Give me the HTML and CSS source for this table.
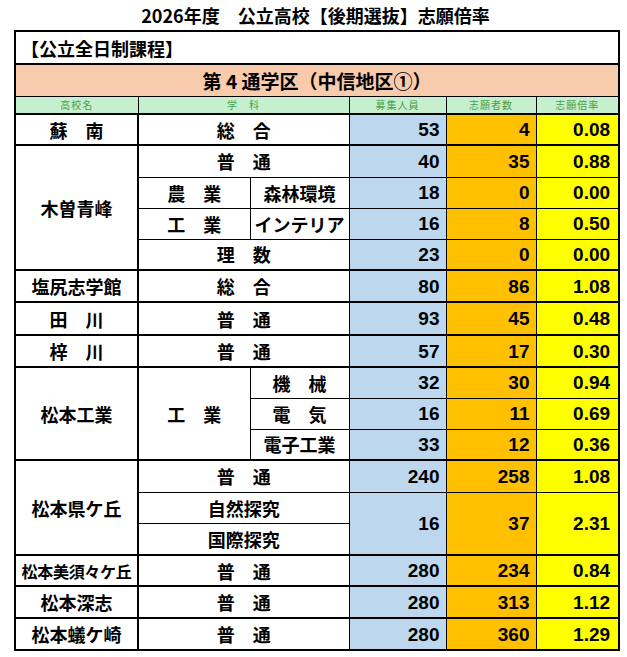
FILE: index.html
```html
<!DOCTYPE html>
<html lang="ja">
<head>
<meta charset="utf-8">
<title>2026年度 公立高校【後期選抜】志願倍率</title>
<link rel="stylesheet" href="styles.css">
</head>
<body>
<h1 class="title">2026年度　公立高校【後期選抜】志願倍率</h1>
<table class="sheet">
  <colgroup>
    <col class="c-name"><col class="c-sub1"><col class="c-sub2"><col class="c-cap"><col class="c-app"><col class="c-rate">
  </colgroup>
  <tr class="r-cap"><td colspan="6" class="cap">【公立全日制課程】</td></tr>
  <tr class="r-dist"><td colspan="6" class="dist">第 4 通学区（中信地区①）</td></tr>
  <tr class="r-head">
    <td class="hd">高校名</td><td class="hd" colspan="2">学　科</td><td class="hd">募集人員</td><td class="hd">志願者数</td><td class="hd">志願倍率</td>
  </tr>

  <tr class="grp h31"><td class="name">蘇　南</td><td class="sub" colspan="2">総　合</td><td class="num blue">53</td><td class="num orange">4</td><td class="num yellow">0.08</td></tr>

  <tr class="grp h32"><td class="name" rowspan="4">木曽青峰</td><td class="sub" colspan="2">普　通</td><td class="num blue">40</td><td class="num orange">35</td><td class="num yellow">0.88</td></tr>
  <tr class="h31"><td class="sub">農　業</td><td class="sub">森林環境</td><td class="num blue">18</td><td class="num orange">0</td><td class="num yellow">0.00</td></tr>
  <tr class="h31"><td class="sub">工　業</td><td class="sub">インテリア</td><td class="num blue">16</td><td class="num orange">8</td><td class="num yellow">0.50</td></tr>
  <tr class="h31"><td class="sub" colspan="2">理　数</td><td class="num blue">23</td><td class="num orange">0</td><td class="num yellow">0.00</td></tr>

  <tr class="grp h32"><td class="name">塩尻志学館</td><td class="sub" colspan="2">総　合</td><td class="num blue">80</td><td class="num orange">86</td><td class="num yellow">1.08</td></tr>
  <tr class="grp h33"><td class="name">田　川</td><td class="sub" colspan="2">普　通</td><td class="num blue">93</td><td class="num orange">45</td><td class="num yellow">0.48</td></tr>
  <tr class="grp h32"><td class="name">梓　川</td><td class="sub" colspan="2">普　通</td><td class="num blue">57</td><td class="num orange">17</td><td class="num yellow">0.30</td></tr>

  <tr class="grp h31"><td class="name" rowspan="3">松本工業</td><td class="sub" rowspan="3">工　業</td><td class="sub">機　械</td><td class="num blue">32</td><td class="num orange">30</td><td class="num yellow">0.94</td></tr>
  <tr class="h31"><td class="sub">電　気</td><td class="num blue">16</td><td class="num orange">11</td><td class="num yellow">0.69</td></tr>
  <tr class="h31"><td class="sub">電子工業</td><td class="num blue">33</td><td class="num orange">12</td><td class="num yellow">0.36</td></tr>

  <tr class="grp h32"><td class="name" rowspan="3">松本県ケ丘</td><td class="sub" colspan="2">普　通</td><td class="num blue">240</td><td class="num orange">258</td><td class="num yellow">1.08</td></tr>
  <tr class="h31"><td class="sub" colspan="2">自然探究</td><td class="num blue" rowspan="2">16</td><td class="num orange" rowspan="2">37</td><td class="num yellow" rowspan="2">2.31</td></tr>
  <tr class="h32"><td class="sub" colspan="2">国際探究</td></tr>

  <tr class="grp h31"><td class="name small">松本美須々ケ丘</td><td class="sub" colspan="2">普　通</td><td class="num blue">280</td><td class="num orange">234</td><td class="num yellow">0.84</td></tr>
  <tr class="grp h32"><td class="name">松本深志</td><td class="sub" colspan="2">普　通</td><td class="num blue">280</td><td class="num orange">313</td><td class="num yellow">1.12</td></tr>
  <tr class="grp h32"><td class="name">松本蟻ケ崎</td><td class="sub" colspan="2">普　通</td><td class="num blue">280</td><td class="num orange">360</td><td class="num yellow">1.29</td></tr>
</table>
</body>
</html>
```

FILE: styles.css
```css
html, body {
  margin: 0;
  padding: 0;
  background: #ffffff;
}

body {
  font-family: "Noto Sans CJK JP", sans-serif;
  color: #000;
}

.title {
  margin: 0;
  height: 30px;
  line-height: 30px;
  text-align: center;
  font-size: 18px;
  font-weight: bold;
  padding-left: 4px;
}

.sheet {
  margin-left: 14px;
  border-collapse: collapse;
  table-layout: fixed;
  width: 604px;
  border: 2px solid #000;
}

.c-name { width: 123px; }
.c-sub1 { width: 112px; }
.c-sub2 { width: 99px; }
.c-cap  { width: 97px; }
.c-app  { width: 90px; }
.c-rate { width: 83px; }

.sheet td {
  border: 1px solid #000;
  padding: 0;
  line-height: 1;
  font-weight: bold;
  font-size: 17px;
  text-align: center;
  vertical-align: middle;
  white-space: nowrap;
  overflow: hidden;
}

.r-cap { height: 33px; }
.r-dist { height: 32px; }
.r-head { height: 18px; }

.sheet td.cap {
  text-align: left;
  padding-left: 5px;
  font-size: 18px;
  border-bottom: 2px solid #000;
}

.sheet td.dist {
  background: #f8cbad;
  font-size: 19px;
  border-bottom: 1px solid #000;
}

.sheet td.hd {
  background: #c6efce;
  color: #4aa04a;
  font-weight: normal;
  font-size: 10px;
  letter-spacing: 1px;
}

.h31 { height: 31px; }
.h32 { height: 32px; }
.h33 { height: 33px; }

.grp td { border-top: 2px solid #000; }

.sheet td.name {
  border-right: 2px solid #000;
  font-size: 18px;
}

.sheet td.name.small {
  font-size: 16px;
  letter-spacing: -0.3px;
}

.sheet td.sub {
  font-size: 18px;
}

.sheet td.num {
  font-family: "Liberation Sans", sans-serif;
  font-size: 19px;
  text-align: right;
  padding-right: 6px;
}

.sheet td.num.yellow {
  padding-right: 8px;
}

.blue { background: #bdd7ee; }
.orange { background: #ffc000; }
.yellow { background: #ffff00; }
```
